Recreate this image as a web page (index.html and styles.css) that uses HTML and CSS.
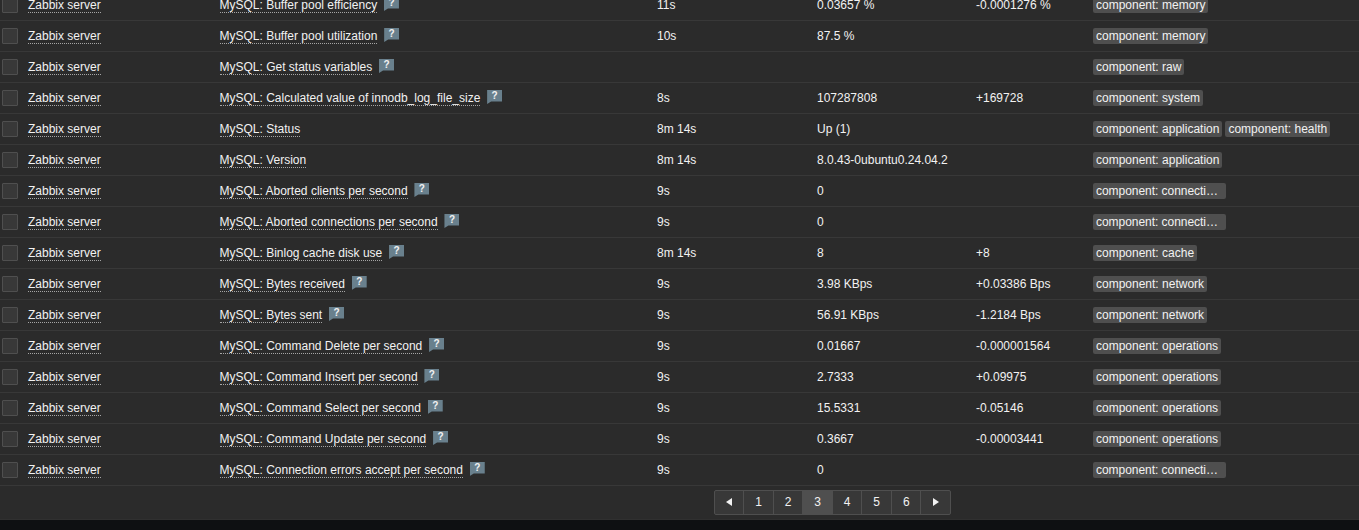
FILE: index.html
```
<!DOCTYPE html>
<html lang="en">
<head>
<meta charset="utf-8">
<title>Latest data</title>
<link rel="stylesheet" href="styles.css">
</head>
<body>
<main class="panel">
<div class="rows">
<div class="row"><i class="check"></i><div><a class="link">Zabbix server</a></div><div><a class="link">MySQL: Buffer pool efficiency</a><span class="help">?</span></div><div>11s</div><div>0.03657 %</div><div>-0.0001276 %</div><div class="tags"><span class="tag">component: memory</span></div></div>
<div class="row"><i class="check"></i><div><a class="link">Zabbix server</a></div><div><a class="link">MySQL: Buffer pool utilization</a><span class="help">?</span></div><div>10s</div><div>87.5 %</div><div></div><div class="tags"><span class="tag">component: memory</span></div></div>
<div class="row"><i class="check"></i><div><a class="link">Zabbix server</a></div><div><a class="link">MySQL: Get status variables</a><span class="help">?</span></div><div></div><div></div><div></div><div class="tags"><span class="tag">component: raw</span></div></div>
<div class="row"><i class="check"></i><div><a class="link">Zabbix server</a></div><div><a class="link">MySQL: Calculated value of innodb_log_file_size</a><span class="help">?</span></div><div>8s</div><div>107287808</div><div>+169728</div><div class="tags"><span class="tag">component: system</span></div></div>
<div class="row"><i class="check"></i><div><a class="link">Zabbix server</a></div><div><a class="link">MySQL: Status</a></div><div>8m 14s</div><div>Up (1)</div><div></div><div class="tags"><span class="tag">component: application</span><span class="tag">component: health</span></div></div>
<div class="row"><i class="check"></i><div><a class="link">Zabbix server</a></div><div><a class="link">MySQL: Version</a></div><div>8m 14s</div><div>8.0.43-0ubuntu0.24.04.2</div><div></div><div class="tags"><span class="tag">component: application</span></div></div>
<div class="row"><i class="check"></i><div><a class="link">Zabbix server</a></div><div><a class="link">MySQL: Aborted clients per second</a><span class="help">?</span></div><div>9s</div><div>0</div><div></div><div class="tags"><span class="tag tag-cut">component: connecti…</span></div></div>
<div class="row"><i class="check"></i><div><a class="link">Zabbix server</a></div><div><a class="link">MySQL: Aborted connections per second</a><span class="help">?</span></div><div>9s</div><div>0</div><div></div><div class="tags"><span class="tag tag-cut">component: connecti…</span></div></div>
<div class="row"><i class="check"></i><div><a class="link">Zabbix server</a></div><div><a class="link">MySQL: Binlog cache disk use</a><span class="help">?</span></div><div>8m 14s</div><div>8</div><div>+8</div><div class="tags"><span class="tag">component: cache</span></div></div>
<div class="row"><i class="check"></i><div><a class="link">Zabbix server</a></div><div><a class="link">MySQL: Bytes received</a><span class="help">?</span></div><div>9s</div><div>3.98 KBps</div><div>+0.03386 Bps</div><div class="tags"><span class="tag">component: network</span></div></div>
<div class="row"><i class="check"></i><div><a class="link">Zabbix server</a></div><div><a class="link">MySQL: Bytes sent</a><span class="help">?</span></div><div>9s</div><div>56.91 KBps</div><div>-1.2184 Bps</div><div class="tags"><span class="tag">component: network</span></div></div>
<div class="row"><i class="check"></i><div><a class="link">Zabbix server</a></div><div><a class="link">MySQL: Command Delete per second</a><span class="help">?</span></div><div>9s</div><div>0.01667</div><div>-0.000001564</div><div class="tags"><span class="tag">component: operations</span></div></div>
<div class="row"><i class="check"></i><div><a class="link">Zabbix server</a></div><div><a class="link">MySQL: Command Insert per second</a><span class="help">?</span></div><div>9s</div><div>2.7333</div><div>+0.09975</div><div class="tags"><span class="tag">component: operations</span></div></div>
<div class="row"><i class="check"></i><div><a class="link">Zabbix server</a></div><div><a class="link">MySQL: Command Select per second</a><span class="help">?</span></div><div>9s</div><div>15.5331</div><div>-0.05146</div><div class="tags"><span class="tag">component: operations</span></div></div>
<div class="row"><i class="check"></i><div><a class="link">Zabbix server</a></div><div><a class="link">MySQL: Command Update per second</a><span class="help">?</span></div><div>9s</div><div>0.3667</div><div>-0.00003441</div><div class="tags"><span class="tag">component: operations</span></div></div>
<div class="row"><i class="check"></i><div><a class="link">Zabbix server</a></div><div><a class="link">MySQL: Connection errors accept per second</a><span class="help">?</span></div><div>9s</div><div>0</div><div></div><div class="tags"><span class="tag tag-cut">component: connecti…</span></div></div>
</div>
<nav class="pager">
<a class="page arrow"><svg width="6" height="8" viewBox="0 0 6 8"><path d="M6 0v8L0 4z" fill="#f2f2f2"/></svg></a><a class="page">1</a><a class="page">2</a><a class="page current">3</a><a class="page">4</a><a class="page">5</a><a class="page">6</a><a class="page arrow"><svg width="6" height="8" viewBox="0 0 6 8"><path d="M0 0v8l6-4z" fill="#f2f2f2"/></svg></a>
</nav>
</main>
</body>
</html>
```
FILE: styles.css
```
* { box-sizing: border-box; }
body {
  margin: 0;
  height: 530px;
  overflow: hidden;
  background: #0e1012;
  color: #f2f2f2;
  font: 12px/14px "Liberation Sans", Arial, sans-serif;
}
.panel {
  display: flex;
  flex-direction: column;
  height: 520px;
  background: #2b2b2b;
  border-bottom: 1px solid #303030;
}
.rows { margin-top: -10px; }
.row {
  display: grid;
  grid-template-columns: 26px 191.5px 437.5px 160px 159px 117px 1fr;
  height: 31px;
  padding: 7px 0 0 2px;
  border-bottom: 1px solid #383838;
  white-space: nowrap;
}
.row > div { padding-top: 1px; }
.row > .tags { display: flex; gap: 3px; padding: 0; }
.check {
  width: 16px;
  height: 16px;
  background: #383838;
  border: 1px solid #4f4f4f;
  border-radius: 1px;
}
.link {
  display: inline-block;
  height: 15px;
  border-bottom: 1px dotted #a5a5a5;
}
.help {
  display: inline-block;
  width: 15px;
  height: 14px;
  margin: -1px 0 0 6.8px;
  vertical-align: top;
  background: #69808d;
  clip-path: polygon(0 0, 100% 0, 100% 11.5px, 4px 11.5px, 0 14px);
  font-size: 10px;
  font-weight: bold;
  line-height: 12px;
  text-align: center;
}
.tag {
  height: 16px;
  padding: 1px 3px;
  background: #4f4f4f;
  border-radius: 2px;
}
.tag-cut { width: 133px; letter-spacing: -0.04px; }
.pager {
  display: flex;
  align-self: center;
  width: 237px;
  height: 25px;
  margin: 4px 0 0 306px;
  border: 1px solid #4f4f4f;
  border-radius: 2px;
  background: #383838;
}
.page {
  display: flex;
  flex: 1;
  align-items: center;
  justify-content: center;
  padding-bottom: 2px;
  border-left: 1px solid #4f4f4f;
}
.page.arrow { padding-bottom: 1px; }
.page:first-child { flex: 0 0 28.4px; border-left: 0; }
.page.current { background: #4f4f4f; }
```
